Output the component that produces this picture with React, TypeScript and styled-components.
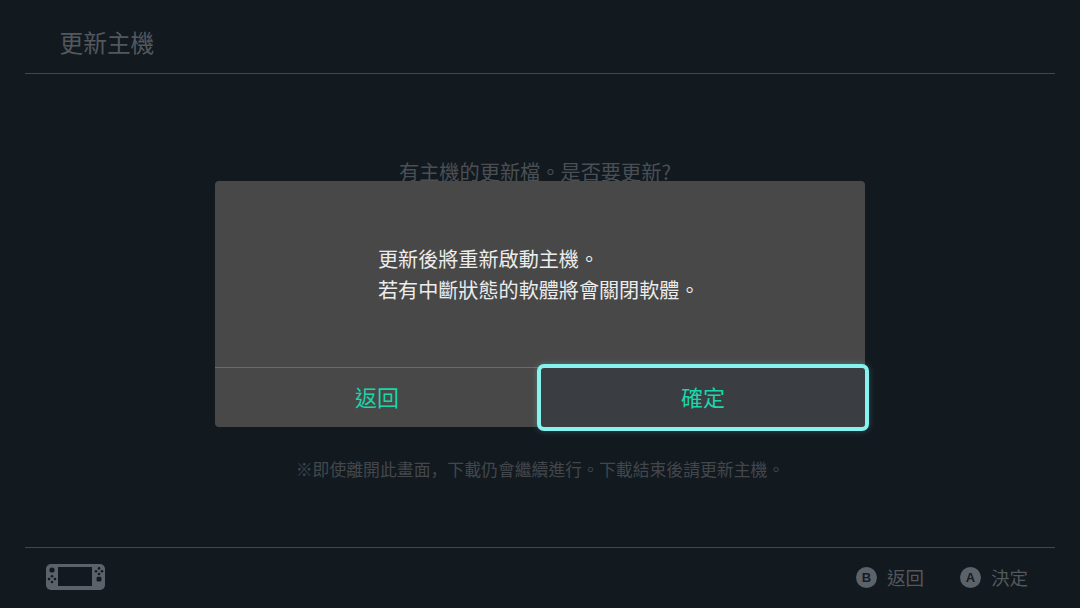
import { createGlobalStyle, styled } from "styled-components";

const GlobalStyle = createGlobalStyle`
  html, body {
    margin: 0;
    padding: 0;
    background: #121a20;
  }
  body {
    font-family: "Noto Sans CJK TC", "Noto Sans", sans-serif;
  }
`;

const Page = styled.div`
  position: relative;
  display: flex;
  flex-direction: column;
  width: 1080px;
  height: 608px;
  overflow: hidden;
  background: #121a20;
`;

const Header = styled.header`
  display: flex;
  align-items: center;
  height: 74px;
  margin: 0 25px;
  padding: 11px 0 0 34.5px;
  box-sizing: border-box;
  border-bottom: 1px solid #43474c;
`;

const Title = styled.h1`
  margin: 0;
  font-size: 23.7px;
  font-weight: 400;
  color: #54585d;
`;

const Content = styled.main`
  flex: 1;
  display: flex;
  flex-direction: column;
  align-items: center;
  justify-content: space-between;
  padding: 83px 0 65px;
`;

const Question = styled.p`
  margin: 0;
  padding-right: 10px;
  font-size: 20.2px;
  line-height: 30px;
  color: #4b4f54;
`;

const Note = styled.p`
  margin: 0;
  font-size: 16.85px;
  line-height: 26px;
  color: #43474c;
`;

// the reference sets its comma low and to the left of the cell
const Comma = styled.span`
  font-family: "Noto Sans CJK SC", sans-serif;
`;

const Footer = styled.footer`
  display: flex;
  align-items: center;
  justify-content: space-between;
  height: 61px;
  margin: 0 25px;
  padding: 0 27px 2px 21px;
  box-sizing: border-box;
  border-top: 1px solid #43474c;
`;

const Hints = styled.div`
  display: flex;
  align-items: center;
  gap: 36px;
`;

const Hint = styled.div`
  display: flex;
  align-items: center;
  gap: 10px;
  font-size: 18.5px;
  color: #54585d;
`;

const HintKey = styled.span`
  display: flex;
  align-items: center;
  justify-content: center;
  width: 21px;
  height: 21px;
  border-radius: 50%;
  background: #5c626a;
  color: #161c22;
  font-family: "Liberation Sans", sans-serif;
  font-size: 13px;
  font-weight: 700;
`;

const Dialog = styled.div`
  position: absolute;
  top: 181px;
  left: 215px;
  display: flex;
  flex-direction: column;
  width: 650px;
  height: 246px;
  border-radius: 4px;
  background: #484848;
`;

const Message = styled.div`
  flex: 1;
  padding: 62px 0 0 163px;
  border-bottom: 1px solid #6a6a6a;
  font-size: 20.1px;
  line-height: 31px;
  color: #ececec;
`;

const Actions = styled.div`
  display: grid;
  grid-template-columns: 322px 328px;
  height: 59px;
`;

const Action = styled.button<{ $focused?: boolean }>`
  display: flex;
  align-items: center;
  justify-content: center;
  font-family: inherit;
  font-size: 22px;
  color: #1ad6aa;
  cursor: pointer;
  box-sizing: border-box;
  padding: ${(p) => (p.$focused ? "0 0 3px" : "0 0 4px 2px")};
  background: ${(p) => (p.$focused ? "#3a3d42" : "transparent")};
  border: ${(p) => (p.$focused ? "4px solid #86f3ef" : "none")};
  border-radius: ${(p) => (p.$focused ? "7px" : "0")};
  margin: ${(p) => (p.$focused ? "-4px -4px -4px 0" : "0")};
  box-shadow: ${(p) => (p.$focused ? "0 0 6px rgba(134, 243, 239, 0.25)" : "none")};
`;

const ConsoleIcon = () => (
  <svg width="59" height="26" viewBox="0 0 59 26" aria-hidden="true">
    <rect width="59" height="26" rx="5" fill="#5c626a" />
    <rect x="12" y="3" width="34" height="19" fill="#121a20" />
    <circle cx="6" cy="6" r="2.6" fill="#121a20" />
    <g fill="#121a20">
      <circle cx="6" cy="12.2" r="1.3" />
      <circle cx="6" cy="18" r="1.3" />
      <circle cx="3" cy="15.1" r="1.3" />
      <circle cx="9" cy="15.1" r="1.3" />
      <circle cx="53" cy="4.4" r="1.3" />
      <circle cx="53" cy="10" r="1.3" />
      <circle cx="50" cy="7.2" r="1.3" />
      <circle cx="56" cy="7.2" r="1.3" />
    </g>
    <rect x="50.6" y="12.8" width="4.8" height="4.8" rx="1.4" fill="#121a20" />
  </svg>
);

export default function App() {
  return (
    <>
      <GlobalStyle />
      <Page>
        <Header>
          <Title>更新主機</Title>
        </Header>
        <Content>
          <Question>有主機的更新檔。是否要更新?</Question>
          <Note>
            ※即使離開此畫面<Comma>，</Comma>下載仍會繼續進行。下載結束後請更新主機。
          </Note>
        </Content>
        <Footer>
          <ConsoleIcon />
          <Hints>
            <Hint>
              <HintKey>B</HintKey>
              返回
            </Hint>
            <Hint>
              <HintKey>A</HintKey>
              決定
            </Hint>
          </Hints>
        </Footer>
        <Dialog>
          <Message>
            更新後將重新啟動主機。
            <br />
            若有中斷狀態的軟體將會關閉軟體。
          </Message>
          <Actions>
            <Action>返回</Action>
            <Action $focused>確定</Action>
          </Actions>
        </Dialog>
      </Page>
    </>
  );
}
